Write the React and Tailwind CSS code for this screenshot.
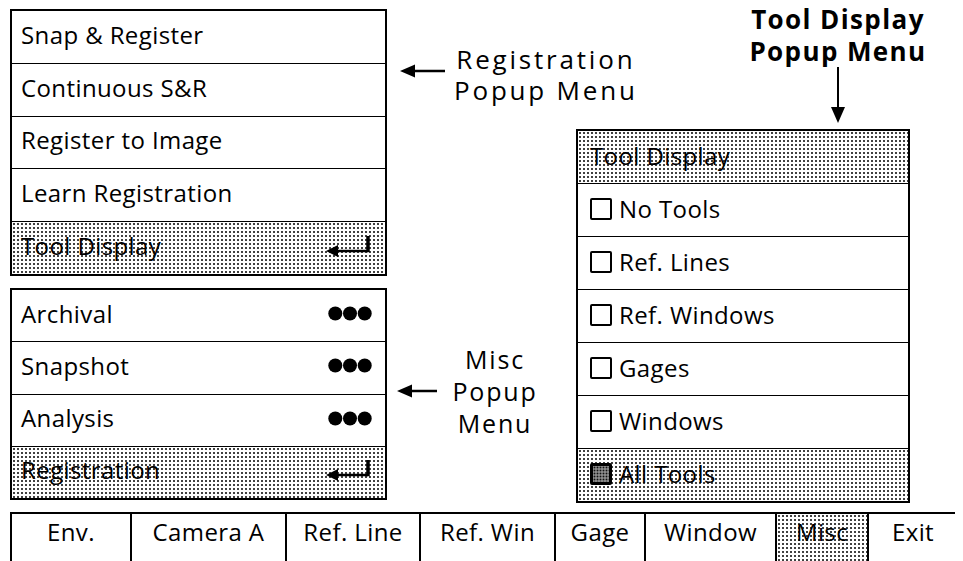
import React from "react";

const shade =
  "bg-white bg-[radial-gradient(circle,#3c3c3c_0.7px,transparent_1px)] bg-[length:4px_4px]";

const ReturnIcon = () => (
  <svg width="46" height="22" viewBox="0 0 46 22" className="shrink-0">
    <polygon points="0,16 12,10 12,22" fill="#000" />
    <line x1="10" y1="16" x2="42" y2="16" stroke="#000" strokeWidth="2.5" />
    <line x1="42" y1="1" x2="42" y2="17.2" stroke="#000" strokeWidth="3.5" />
  </svg>
);

const Dots = () => (
  <svg width="44" height="15" viewBox="0 0 44 15" className="shrink-0">
    <circle cx="7.3" cy="7.5" r="7" fill="#000" />
    <circle cx="22" cy="7.5" r="7" fill="#000" />
    <circle cx="36.7" cy="7.5" r="7" fill="#000" />
  </svg>
);

const MenuRow = ({ label, right, shaded }) => (
  <div
    className={`flex-1 flex items-center justify-between pl-[9px] pr-[13px] pb-[4px] border-t-[1.5px] border-black first:border-t-0 ${
      shaded ? shade : "bg-white"
    }`}
  >
    <span className="text-[24px] tracking-[0.4px] leading-[30px]">{label}</span>
    {right === "dots" && <Dots />}
    {right === "return" && <ReturnIcon />}
  </div>
);

const CheckRow = ({ label, shaded, checked, box = true }) => (
  <div
    className={`flex-1 flex items-center pl-[12px] pb-[3px] border-t-[1.5px] border-black first:border-t-0 ${
      shaded ? shade : "bg-white"
    }`}
  >
    {box && (
      <span
        className={`mr-[7px] w-[22px] h-[22px] rounded-[2px] border-black shrink-0 ${
          checked
            ? "border-[3px] bg-[#888] bg-[radial-gradient(circle,#111_0.8px,transparent_1.1px)] bg-[length:3px_3px]"
            : "border-2 bg-white"
        }`}
      />
    )}
    <span className="text-[24px] tracking-[0.4px] leading-[30px]">{label}</span>
  </div>
);

const LeftArrow = ({ width }) => (
  <svg width={width} height="16" viewBox={`0 0 ${width} 16`} className="shrink-0">
    <polygon points="0,8 15,1.5 15,14.5" fill="#000" />
    <line x1="12" y1="8" x2={width} y2="8" stroke="#000" strokeWidth="2.5" />
  </svg>
);

const tabs = [
  { label: "Env.", w: "w-[118px]" },
  { label: "Camera A", w: "w-[155px]" },
  { label: "Ref. Line", w: "w-[134px]" },
  { label: "Ref. Win", w: "w-[135px]" },
  { label: "Gage", w: "w-[90px]" },
  { label: "Window", w: "w-[131px]" },
  { label: "Misc", w: "w-[92px]", shaded: true },
  { label: "Exit", w: "w-[90px]" },
];

export default function App() {
  return (
    <div className="w-[963px] h-[561px] bg-white overflow-hidden text-black font-['Open_Sans',sans-serif]">
      <div className="flex">
        {/* Left popup menus */}
        <div className="ml-[10px] mt-[9px] w-[377px] shrink-0 flex flex-col">
          <div className="h-[267px] flex flex-col border-2 border-black">
            <MenuRow label="Snap & Register" />
            <MenuRow label="Continuous S&R" />
            <MenuRow label="Register to Image" />
            <MenuRow label="Learn Registration" />
            <MenuRow label="Tool Display" right="return" shaded />
          </div>
          <div className="mt-[12px] h-[212px] flex flex-col border-2 border-black">
            <MenuRow label="Archival" right="dots" />
            <MenuRow label="Snapshot" right="dots" />
            <MenuRow label="Analysis" right="dots" />
            <MenuRow label="Registration" right="return" shaded />
          </div>
        </div>

        {/* Callouts */}
        <div className="w-[189px] shrink-0 flex flex-col">
          <div className="mt-[44px] ml-[13px] flex items-start whitespace-nowrap">
            <div className="mt-[19px]">
              <LeftArrow width={45} />
            </div>
            <div className="ml-[9px] text-center text-[26px] tracking-[2.8px] leading-[31px]">
              <div>Registration</div>
              <div>Popup Menu</div>
            </div>
          </div>
          <div className="mt-[237px] ml-[10px] flex items-start whitespace-nowrap">
            <div className="mt-[40px]">
              <LeftArrow width={40} />
            </div>
            <div className="ml-[8px] w-[100px] text-center text-[25px] tracking-[1.8px] leading-[32px]">
              <div>Misc</div>
              <div>Popup</div>
              <div>Menu</div>
            </div>
          </div>
        </div>

        {/* Tool display popup */}
        <div className="shrink-0 flex flex-col">
          <div className="ml-[162px] mt-[3px] w-[200px] flex flex-col items-center">
            <div className="text-center font-bold whitespace-nowrap text-[26px] tracking-[1.4px] leading-[32px]">
              <div>Tool Display</div>
              <div>Popup Menu</div>
            </div>
            <svg width="14" height="56" viewBox="0 0 14 56">
              <line x1="7" y1="0" x2="7" y2="44" stroke="#000" strokeWidth="2" />
              <polygon points="0,40 14,40 7,56" fill="#000" />
            </svg>
          </div>
          <div className="mt-[6px] w-[334px] h-[374px] flex flex-col border-2 border-black">
            <CheckRow label="Tool Display" shaded box={false} />
            <CheckRow label="No Tools" />
            <CheckRow label="Ref. Lines" />
            <CheckRow label="Ref. Windows" />
            <CheckRow label="Gages" />
            <CheckRow label="Windows" />
            <CheckRow label="All Tools" shaded checked />
          </div>
        </div>
      </div>

      {/* Bottom menu bar */}
      <div className="ml-[10px] mt-[9px] w-[945px] h-[60px] flex border-2 border-black">
        {tabs.map((t) => (
          <div
            key={t.label}
            className={`${t.w} shrink-0 flex justify-center pt-[3px] border-l-2 border-black first:border-l-0 ${
              t.shaded ? shade : "bg-white"
            }`}
          >
            <span className="text-[24px] tracking-[0.4px] leading-[30px]">{t.label}</span>
          </div>
        ))}
      </div>
    </div>
  );
}
